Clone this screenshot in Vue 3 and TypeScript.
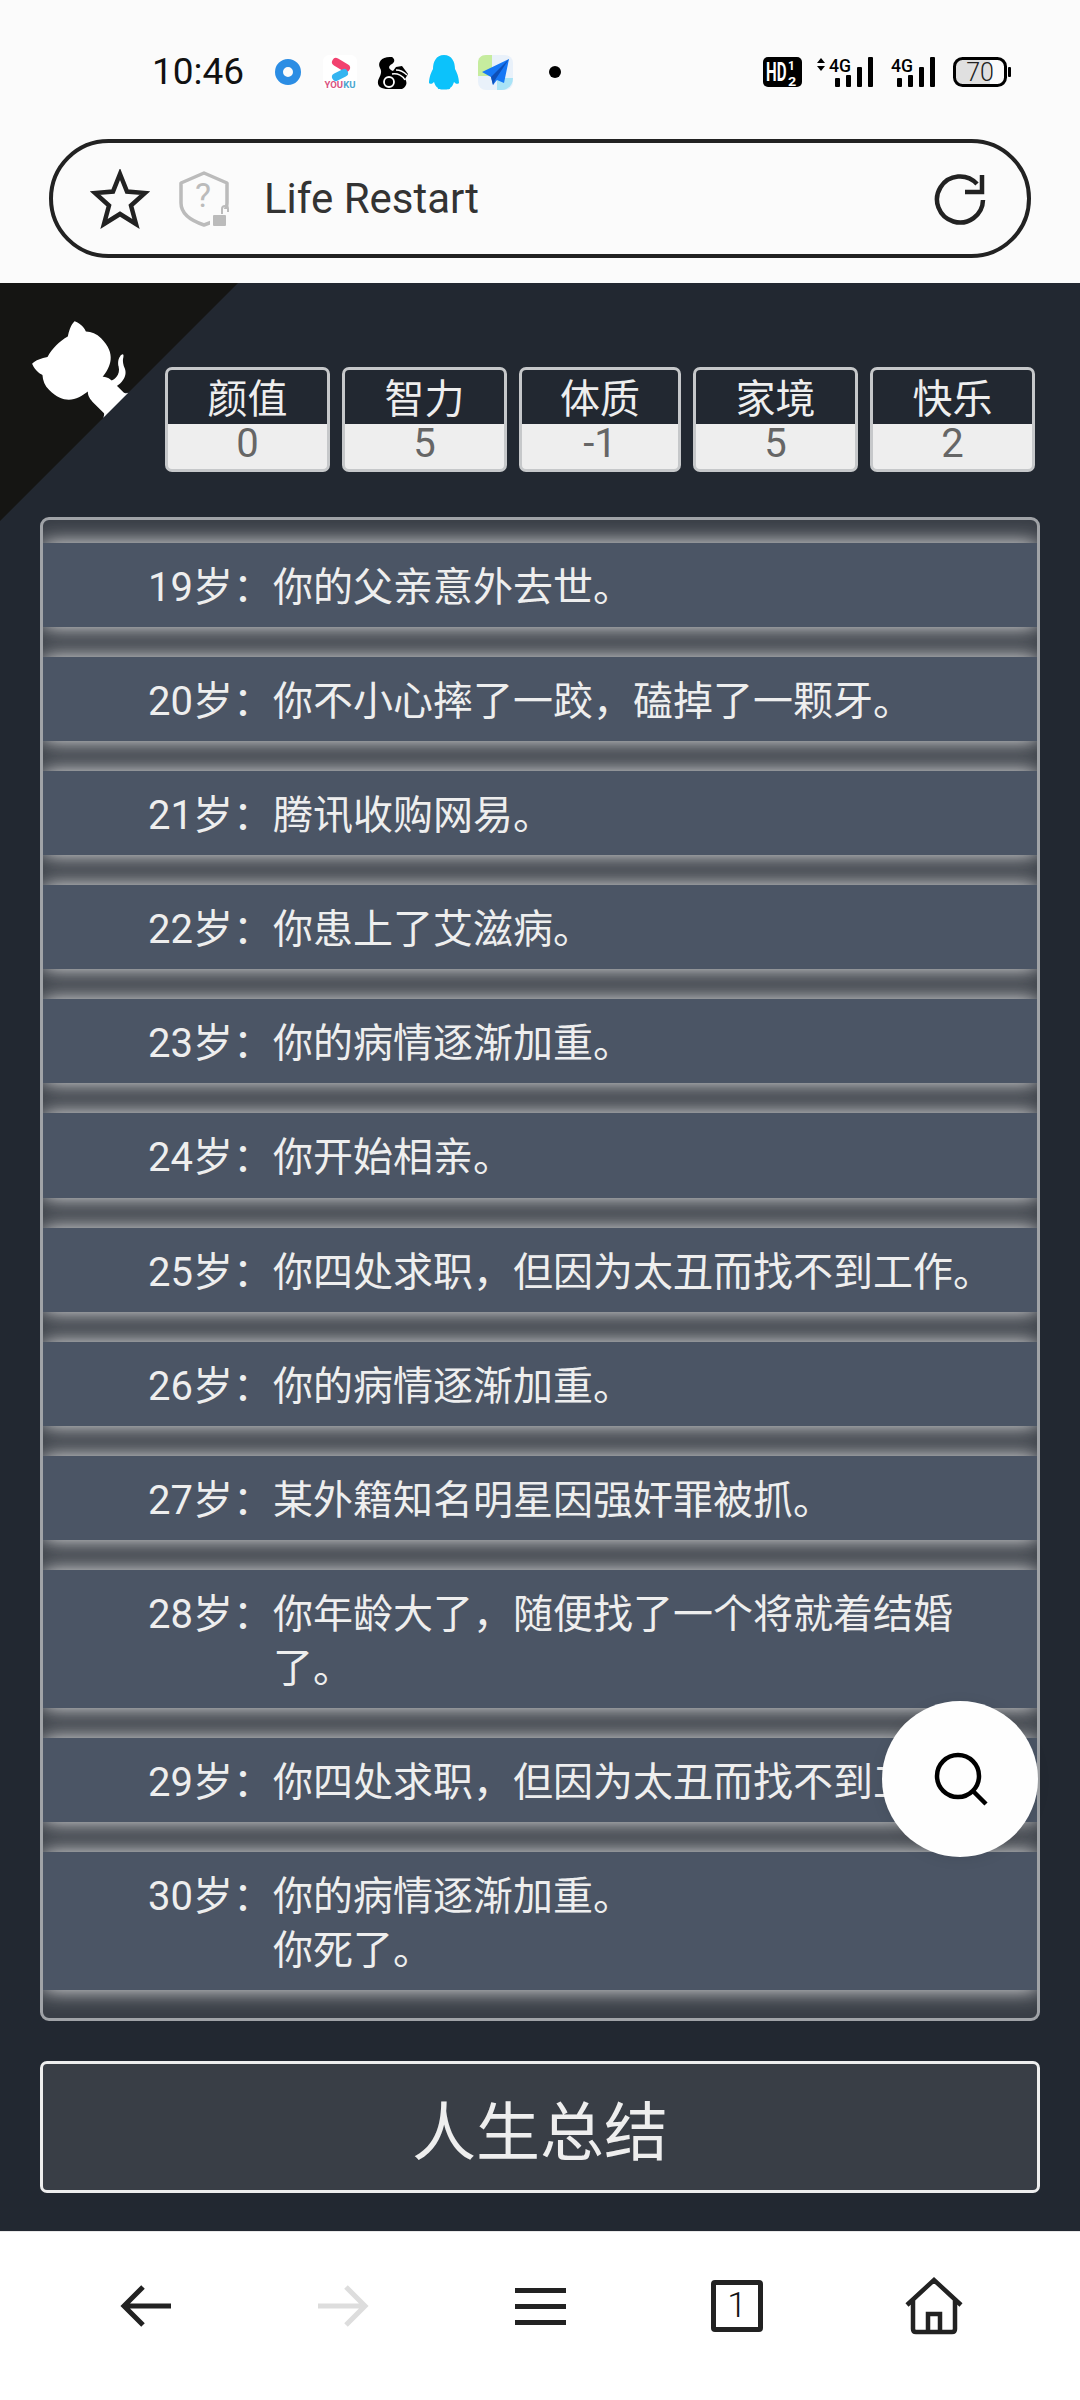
<script setup lang="ts">
interface LifeRow {
  age: number;
  lines: string[];
}

const stats = [
  { label: '颜值', value: 0 },
  { label: '智力', value: 5 },
  { label: '体质', value: -1 },
  { label: '家境', value: 5 },
  { label: '快乐', value: 2 },
];

const rows: LifeRow[] = [
  { age: 19, lines: ['你的父亲意外去世。'] },
  { age: 20, lines: ['你不小心摔了一跤，磕掉了一颗牙。'] },
  { age: 21, lines: ['腾讯收购网易。'] },
  { age: 22, lines: ['你患上了艾滋病。'] },
  { age: 23, lines: ['你的病情逐渐加重。'] },
  { age: 24, lines: ['你开始相亲。'] },
  { age: 25, lines: ['你四处求职，但因为太丑而找不到工作。'] },
  { age: 26, lines: ['你的病情逐渐加重。'] },
  { age: 27, lines: ['某外籍知名明星因强奸罪被抓。'] },
  { age: 28, lines: ['你年龄大了，随便找了一个将就着结婚了。'] },
  { age: 29, lines: ['你四处求职，但因为太丑而找不到工作。'] },
  { age: 30, lines: ['你的病情逐渐加重。', '你死了。'] },
];
</script>

<template>
  <div class="phone">
    <header class="status">
      <span class="time">10:46</span>
      <svg class="notif" width="300" height="44" viewBox="270 50 300 44">
        <circle cx="288" cy="72" r="9" fill="none" stroke="#2b8de4" stroke-width="8" />
        <rect x="323" y="55" width="34" height="34" rx="6" fill="#fff" />
        <path d="M336 62 L346 68" stroke="#f2416f" stroke-width="8" stroke-linecap="round" />
        <path d="M336 77 L344 73" stroke="#35b4f0" stroke-width="8" stroke-linecap="round" />
        <text x="340" y="88" class="youku" text-anchor="middle"><tspan fill="#d9537f">YOU</tspan><tspan fill="#4aa6cf">KU</tspan></text>
        <path d="M392 57 C382 56 377 62 380 68 C383 73 379 77 378 81 C377 87 382 89 388 89 L402 89 C406 87 408 83 405 79 L408 74 L402 66 L396 67 L393 71 C388 69 388 66 392 64 C395 62 395 59 392 57 Z" fill="#000" />
        <circle cx="389" cy="82" r="5" fill="none" stroke="#fff" stroke-width="1.8" />
        <path d="M392 74 C398 73 403 76 405 80 M396 70 C400 70 404 72 407 75" fill="none" stroke="#fff" stroke-width="1.4" />
        <path d="M444 55 C436 55 433 62 433 69 C430 74 429 80 429 83 C431 85 433 83 434 82 C435 85 436 87 438 88 C436 90 452 90 450 88 C452 87 453 85 454 82 C455 83 457 85 459 83 C459 80 458 74 455 69 C455 62 452 55 444 55 Z" fill="#0cc2fb" />
        <rect x="478" y="55" width="35" height="35" rx="8" fill="#e9f1fa" />
        <path d="M478 63 C478 58 481 55 486 55 L492 55 L492 76 L478 76 Z" fill="#c6ec9e" />
        <path d="M497 78 L513 78 C513 85 508 90 502 90 L497 90 Z" fill="#a9e3f6" />
        <path d="M509 59 L482 72 L491 77 L493 85 L497 80 L504 83 Z" fill="#1677f5" />
        <path d="M491 77 L509 59 L495 80 L493 85 Z" fill="#0e4fb8" />
        <circle cx="555" cy="72" r="6" fill="#000" />
      </svg>
      <svg class="sys" width="255" height="44" viewBox="760 50 255 44">
        <rect x="763" y="57" width="39" height="30" rx="5" fill="#000" />
        <text transform="translate(766 81) scale(0.58 1)" class="hd">HD</text>
        <text transform="translate(788 70) scale(0.95 1)" class="frac">1</text>
        <text transform="translate(788 86) scale(1.15 1)" class="frac">2</text>
        <path d="M817 63 L821 58 L825 63 Z M817 66 L825 66 L821 71 Z" fill="#000" />
        <text x="829" y="72" class="net" textLength="22" lengthAdjust="spacingAndGlyphs">4G</text>
        <rect x="835" y="78" width="5" height="9" rx="1" />
        <rect x="846" y="75" width="5" height="12" rx="1" />
        <rect x="857" y="67" width="5" height="20" rx="1" />
        <rect x="868" y="57" width="5" height="30" rx="1" />
        <text x="891" y="72" class="net" textLength="22" lengthAdjust="spacingAndGlyphs">4G</text>
        <rect x="897" y="78" width="5" height="9" rx="1" />
        <rect x="908" y="75" width="5" height="12" rx="1" />
        <rect x="919" y="67" width="5" height="20" rx="1" />
        <rect x="930" y="57" width="5" height="30" rx="1" />
        <path d="M962 60 L990 60 L990 84 L962 84 C958 84 956 82 956 78 L956 66 C956 62 958 60 962 60 Z" fill="#e0e0e0" />
        <rect x="954.5" y="58.5" width="51" height="27" rx="8" fill="none" stroke="#000" stroke-width="3" />
        <rect x="1008" y="67" width="3" height="10" rx="1" fill="#000" />
        <text x="980" y="81" class="batt" text-anchor="middle">70</text>
      </svg>
    </header>

    <div class="urlbar">
      <svg class="star" width="60" height="60" viewBox="0 0 60 60">
        <path d="M30 5 L37 22.5 L55 24 L41 36.5 L46 55 L30 45 L14 55 L19 36.5 L5 24 L23 22.5 Z" fill="none" stroke="#222" stroke-width="4.5" stroke-linejoin="miter" />
      </svg>
      <svg class="shield" width="52" height="58" viewBox="0 0 52 58">
        <path d="M26 3 L49 13 L49 33 C49 44 38 51 26 55 C14 51 3 44 3 33 L3 13 Z" fill="none" stroke="#bbb" stroke-width="3.5" stroke-linejoin="round" />
        <text x="25" y="37" class="shield-q" text-anchor="middle">?</text>
        <rect x="32" y="39" width="20" height="19" fill="#fbfbfb" />
        <rect x="35" y="45" width="13" height="11" rx="1" fill="#bbb" />
        <path d="M44 44 L44 39 C44 35 50 35 50 39 L50 42" fill="none" stroke="#bbb" stroke-width="2" />
      </svg>
      <span class="url-title">Life Restart</span>
      <svg class="reload" width="56" height="56" viewBox="0 0 56 56">
        <path d="M45 13 A23 23 0 1 0 51 29" fill="none" stroke="#222" stroke-width="4.5" />
        <path d="M50 4 L50 21 L33 21" fill="none" stroke="#222" stroke-width="4.5" />
      </svg>
    </div>

    <main class="content">
      <svg class="corner" width="238" height="238" viewBox="0 0 250 250">
        <g transform="translate(250 0) scale(-1 1)">
          <path d="M0,0 L115,115 L130,115 L142,142 L250,250 L250,0 Z" fill="#151513" />
          <path d="M128.3,109.0 C113.8,99.7 119.0,89.6 119.0,89.6 C122.0,82.7 120.5,78.6 120.5,78.6 C119.2,72.0 123.4,76.3 123.4,76.3 C127.3,80.9 125.5,87.3 125.5,87.3 C122.9,97.6 130.6,101.9 134.4,103.2" fill="#fff" />
          <path d="M115.0,115.0 C114.9,115.1 118.7,116.5 119.8,115.4 L133.7,101.6 C136.9,99.2 139.9,98.4 142.2,98.6 C133.8,88.0 127.5,74.4 143.8,58.0 C148.5,53.4 154.0,51.2 159.7,51.0 C160.3,49.4 163.2,43.6 171.4,40.1 C171.4,40.1 176.1,42.5 178.8,56.2 C183.1,58.6 187.2,61.8 190.9,65.4 C194.5,69.0 197.7,73.2 200.1,77.6 C213.8,80.2 216.3,84.9 216.3,84.9 C212.7,93.1 206.9,96.0 205.4,96.6 C205.1,102.4 203.0,107.8 198.3,112.5 C181.9,128.9 168.3,122.5 157.7,114.1 C157.9,116.9 156.7,120.9 152.7,124.9 L141.0,136.5 C139.8,137.7 141.6,141.9 141.8,141.8 Z" fill="#fff" />
        </g>
      </svg>

      <ul class="stats">
        <li v-for="s in stats" :key="s.label" class="stat">
          <div class="stat-label">{{ s.label }}</div>
          <div class="stat-value">{{ s.value }}</div>
        </li>
      </ul>

      <ul class="trajectory">
        <li v-for="r in rows" :key="r.age" class="row">
          <span class="age">{{ r.age }}岁：</span>
          <div class="events">
            <div v-for="line in r.lines" :key="line">{{ line }}</div>
          </div>
        </li>
      </ul>

      <button class="summary">人生总结</button>

      <div class="fab">
        <svg width="64" height="64" viewBox="0 0 64 64">
          <circle cx="30" cy="29" r="21" fill="none" stroke="#000" stroke-width="4.5" />
          <path d="M45 44 L58 57" stroke="#000" stroke-width="4.5" />
        </svg>
      </div>
    </main>

    <nav class="nav">
      <svg width="60" height="60" viewBox="0 0 60 60">
        <path d="M27 11 L8 30 L27 49 M8 30 L55 30" fill="none" stroke="#222" stroke-width="5" />
      </svg>
      <svg width="60" height="60" viewBox="0 0 60 60">
        <path d="M33 11 L52 30 L33 49 M52 30 L5 30" fill="none" stroke="#ddd" stroke-width="5" />
      </svg>
      <div class="menu"><i></i><i></i><i></i></div>
      <div class="tabs">1</div>
      <svg width="60" height="60" viewBox="0 0 60 60">
        <path d="M3 29 L30 4 L57 29 M9 24 L9 53 C9 55 10 56 12 56 L48 56 C50 56 51 55 51 53 L51 24" fill="none" stroke="#222" stroke-width="4.5" />
        <path d="M24 56 L24 38 L36 38 L36 56" fill="none" stroke="#222" stroke-width="4.5" />
      </svg>
    </nav>
  </div>
</template>

<style scoped>
.phone {
  width: 1080px;
  height: 2400px;
  display: flex;
  flex-direction: column;
  background: #fbfbfb;
  font-family: Roboto, "Noto Sans CJK SC", sans-serif;
  overflow: hidden;
}

.status {
  height: 139px;
  flex: none;
  display: flex;
  align-items: flex-start;
  padding: 50px 0 0 152px;
  box-sizing: border-box;
}

.time {
  width: 90px;
  font-size: 37px;
  line-height: 44px;
  color: #111;
  white-space: nowrap;
}

.notif {
  margin-left: 28px;
}

.sys {
  margin-left: 190px;
}

.sys rect:not([fill]) {
  fill: #000;
}

.youku {
  font-size: 9.5px;
  font-weight: 700;
  font-family: Roboto, sans-serif;
}

.hd {
  font-size: 26px;
  font-weight: 700;
  fill: #fff;
}

.frac {
  font-size: 12.5px;
  font-weight: 700;
  fill: #fff;
}

.net {
  font-size: 19px;
  font-weight: 500;
  fill: #000;
}

.batt {
  font-size: 25px;
  font-weight: 300;
  fill: #222;
}

.urlbar {
  flex: none;
  height: 119px;
  margin: 0 49px 25px;
  box-sizing: border-box;
  border: 4px solid #222;
  border-radius: 60px;
  display: flex;
  align-items: center;
  padding-left: 37px;
  padding-right: 39px;
}

.star {
  flex: none;
}

.shield {
  flex: none;
  margin-left: 28px;
}

.shield-q {
  font-size: 34px;
  fill: #bbb;
}

.url-title {
  margin-left: 34px;
  flex: 1;
  font-size: 42px;
  color: #333;
}

.reload {
  flex: none;
}

.content {
  flex: 1;
  position: relative;
  background: #222831;
  padding: 84px 40px 37px;
  box-sizing: border-box;
}

.corner {
  position: absolute;
  left: 0;
  top: 0;
}

.stats {
  list-style: none;
  margin: 0 5px 45px 125px;
  padding: 0;
  display: grid;
  grid-template-columns: 165px 165px 162px 165px 165px;
  column-gap: 12px;
  position: relative;
}

.stat {
  border: 3px solid #c6c8ca;
  border-radius: 7px;
  overflow: hidden;
  background: #eee;
  text-align: center;
  font-size: 40px;
}

.stat-label {
  height: 54px;
  box-sizing: border-box;
  padding-top: 3px;
  line-height: 54px;
  background: #222831;
  color: #eee;
}

.stat-value {
  height: 45px;
  line-height: 40px;
  color: #666;
}

.trajectory {
  list-style: none;
  margin: 0 0 40px;
  padding: 23px 0 28px;
  border: 3px solid #a0a3a7;
  border-radius: 9px;
  background: #393e46;
  overflow: hidden;
  display: flex;
  flex-direction: column;
  gap: 30px;
}

.row {
  display: flex;
  padding: 18px 0 12px 105px;
  background: #4b5565;
  box-shadow: 0 0 20px #eee;
  font-size: 40px;
  line-height: 54.1px;
  color: #eee;
}

.age {
  flex: none;
  width: 125px;
  white-space: nowrap;
}

.events {
  width: 740px;
}

.summary {
  display: block;
  width: 100%;
  height: 132px;
  box-sizing: border-box;
  border: 3px solid #eee;
  border-radius: 7px;
  background: #393e46;
  color: #eee;
  font-family: inherit;
  font-size: 64px;
  padding: 0;
}

.fab {
  position: absolute;
  left: 882px;
  top: 1418px;
  width: 156px;
  height: 156px;
  border-radius: 50%;
  background: #fefefe;
  box-shadow: 0 2px 14px rgba(0, 0, 0, 0.08);
  display: flex;
  align-items: center;
  justify-content: center;
}

.nav {
  flex: none;
  height: 169px;
  background: #fff;
  display: grid;
  grid-template-columns: repeat(5, 197px);
  justify-content: center;
  justify-items: center;
  align-items: center;
  padding-bottom: 20px;
  border-top: 1px solid #e8e8e8;
  box-sizing: border-box;
}

.menu {
  width: 51px;
  display: flex;
  flex-direction: column;
  gap: 11px;
}

.menu i {
  display: block;
  height: 5px;
  background: #222;
}

.tabs {
  width: 52px;
  height: 52px;
  box-sizing: border-box;
  border: 5px solid #222;
  border-radius: 4px;
  text-align: center;
  font-size: 35px;
  font-weight: 300;
  line-height: 41px;
  color: #111;
}
</style>

<style>
html,
body {
  margin: 0;
  background: #fff;
}
</style>
